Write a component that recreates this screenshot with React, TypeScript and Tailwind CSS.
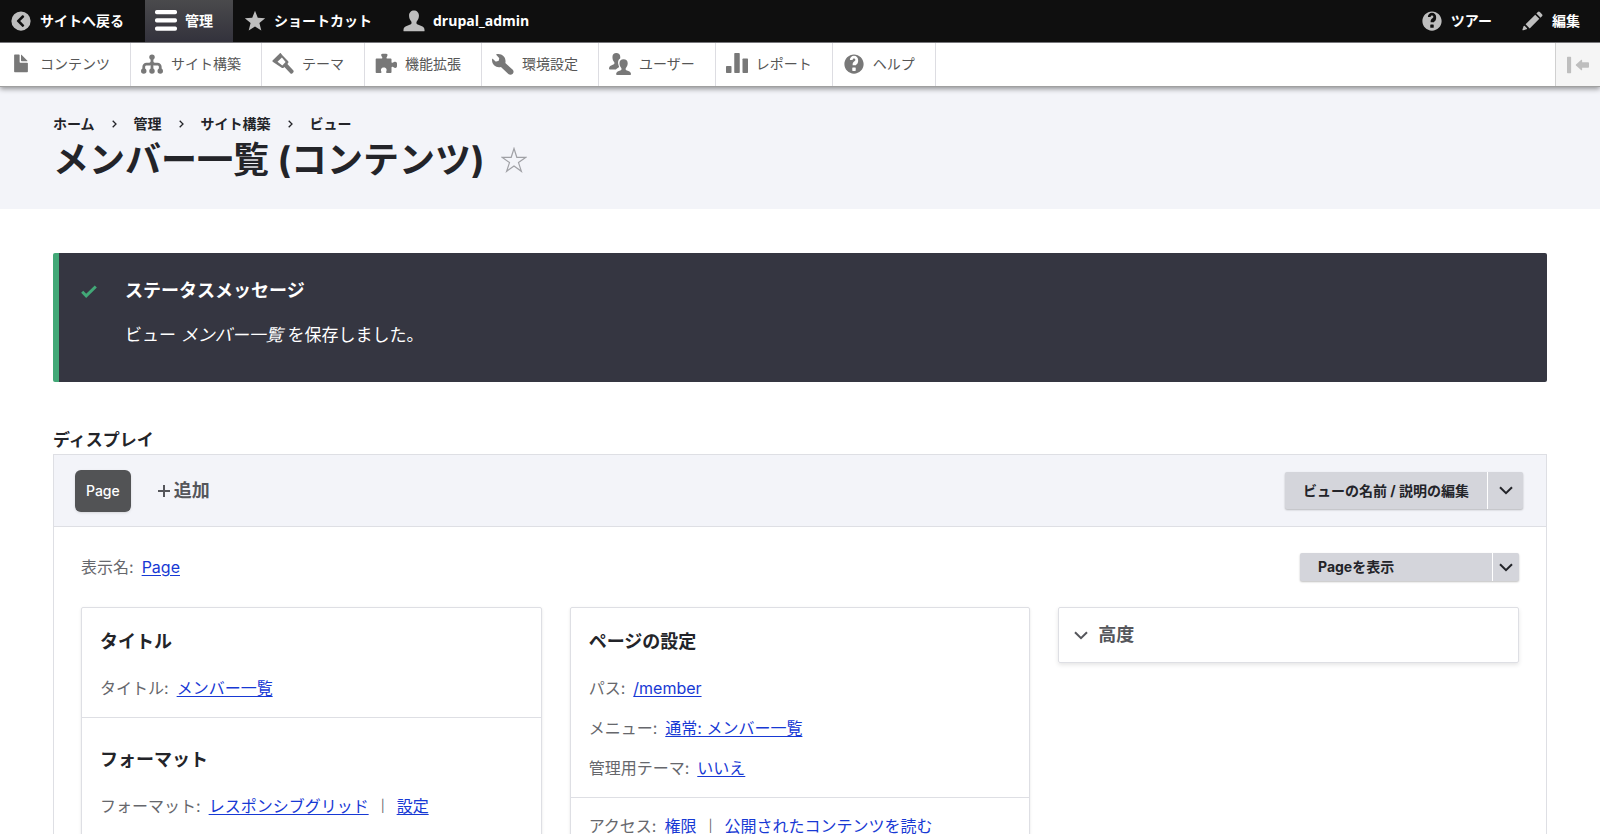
import React, { useState } from "react";

type IconProps = { className?: string; children: React.ReactNode };

const Icon = ({ className = "", children }: IconProps) => (
  <svg
    viewBox="0 0 16 16"
    fill="currentColor"
    aria-hidden="true"
    className={`size-[22px] shrink-0 ${className}`}
  >
    {children}
  </svg>
);

const BackIcon = () => (
  <Icon>
    <path
      fillRule="evenodd"
      d="M8 1a7 7 0 1 0 0 14A7 7 0 0 0 8 1zm2.2 9.9c.2.2.2.5 0 .7l-.6.6c-.2.2-.5.2-.7 0L5.1 8.4a.5.5 0 0 1 0-.7l3.800-3.800c.2-.2.5-.2.7 0l.6.6c.2.2.2.5 0 .7L7.400 8z"
    />
  </Icon>
);

const MenuIcon = () => (
  <Icon>
    <rect x="0" y="0" width="16" height="3" rx="1.25" />
    <rect x="0" y="6" width="16" height="3" rx="1.25" />
    <rect x="0" y="12" width="16" height="3" rx="1.25" />
  </Icon>
);

const StarIcon = () => (
  <Icon>
    <path d="M8 .6l2 5.1 5.4.3-4.2 3.5 1.4 5.4L8 12l-4.6 2.9 1.4-5.4L.6 6 6 5.7z" />
  </Icon>
);

const PersonIcon = () => (
  <Icon>
    <path d="M8 .3c2.1 0 3.6 1.5 3.6 3.7 0 1.7-.6 3.2-1.5 4.2-.5.6-.4 1.9.2 2.2l3.5 1.5c1 .4 1.7 1.2 1.8 2.3l.1.8c0 .3-.2.5-.5.5H.8c-.3 0-.5-.2-.5-.5l.1-.8c.1-1.1.8-1.900 1.800-2.300l3.500-1.500c.6-.3.7-1.600.2-2.200C5 7.200 4.400 5.700 4.400 4 4.400 1.800 5.900.3 8 .3z" />
  </Icon>
);

const QuestionIcon = () => (
  <Icon>
    <path d="M8.002 1c-3.868 0-7.002 3.134-7.002 7s3.134 7 7.002 7c3.865 0 7-3.134 7-7s-3.135-7-7-7zm3 5c0 .551-.16 1.085-.477 1.586l-.158.22c-.07.093-.189.241-.361.393-.168.148-.35.299-.545.447l-.203.189-.141.129-.096.17L9 8.369v.63H7v-.704c.026-.396.078-.73.204-.999.125-.269.271-.498.439-.688l.225-.21-.01-.015.176-.14.137-.128c.186-.139.357-.277.516-.417l.148-.18A.948.948 0 009 5c0-.553-.449-1-1-1s-.999.447-.999 1h-2c0-1.654 1.346-3 3-3s3 1.346 3 3zm-1.75 6.619a.382.382 0 01-.381.381h-1.75a.382.382 0 01-.381-.381v-1.75c0-.21.171-.381.381-.381h1.75c.21 0 .381.171.381.381v1.75z" />
  </Icon>
);

const PencilIcon = () => (
  <Icon>
    <path d="M14.545 3.042l-1.586-1.585a1 1 0 0 0-1.414 0l-1.093 1.093 3 3 1.093-1.093a1 1 0 0 0 0-1.415zM5.6 13.4l-3-3 7-7 3 3zM.94 14.731c-.491.163-.758-.104-.595-.595l.788-2.364a.5.5 0 0 1 .9-.1l1.4 1.4a.5.5 0 0 1-.1.9z" />
  </Icon>
);

const FileIcon = () => (
  <Icon>
    <path d="M12.500 7h-5a.5.5 0 0 1-.5-.5v-5c0-.275-.225-.5-.5-.5h-3a.5.5 0 0 0-.5.5v12.029c0 .275.225.5.5.5h9.002c.275 0 .5-.225.5-.5V7.500c0-.275-.225-.5-.5-.5zM8.502 6h4c.275 0 .34-.159.146-.354L8.355 1.354c-.195-.195-.353-.129-.353.146v4c0 .275.225.5.5.5z" />
  </Icon>
);

const StructureIcon = () => (
  <Icon>
    <path d="M15 11.3V10c0-1.7-1.3-3-3-3h-2c-.6 0-1-.4-1-1V4.700c.6-.3 1-1 1-1.700a2 2 0 1 0-4 0c0 .7.4 1.4 1 1.700V6c0 .6-.4 1-1 1H4c-1.700 0-3 1.300-3 3v1.300c-.6.3-1 1-1 1.700a2 2 0 1 0 4 0c0-.7-.4-1.400-1-1.700V10c0-.6.4-1 1-1h2c.37 0 .7-.06 1-.17v2.470c-.6.3-1 1-1 1.700a2 2 0 1 0 4 0c0-.7-.4-1.400-1-1.700V8.830c.3.11.63.17 1 .17h2c.6 0 1 .4 1 1v1.300c-.6.3-1 1-1 1.700a2 2 0 1 0 4 0c0-.7-.4-1.400-1-1.700z" />
  </Icon>
);

const BrushIcon = () => (
  <Icon>
    <path
      fillRule="evenodd"
      d="M.4 5.400L5.600.3c.3-.3.6-.3.9 0l1.200 1.500 3.900 4.100c.5.6.5 1.100 0 1.600l-.4.5 4.200 4.600c.5.5.5 1.100 0 1.600l-.5.5c-.5.5-1.100.5-1.600 0L9 10.200l-.4.4c-.5.5-1 .5-1.600.1L.5 6.300c-.3-.3-.3-.6-.1-.9zM7.200 3.300L4 6.400l3.500 2.600 2.400-2.400z"
    />
  </Icon>
);

const PuzzleIcon = () => (
  <Icon>
    <path d="M.5 4.500C.5 4.200.7 4 1 4h3.700c.5 0 .8-.4.6-.8L4.600 2c-.3-.8 0-1.500.9-1.500h2.600c.9 0 1.200.7.9 1.500l-.6 1.200c-.2.400.1.800.6.800h2.400c.3 0 .6.200.6.500v2c0 .5.4.8.8.6l1.400-.7c.9-.4 1.800.2 1.800 1.300v1.700c0 1.100-.9 1.700-1.800 1.300l-1.400-.7c-.4-.2-.8.1-.8.6v3.400c0 .3-.3.5-.6.5H8.700c-.5 0-.8-.4-.6-.8.7-1.200.5-3.200-1.700-3.200s-2.400 2-1.700 3.200c.2.4-.1.8-.6.8H1c-.3 0-.5-.2-.5-.5V4.500z" />
  </Icon>
);

const WrenchIcon = () => (
  <Icon>
    <path d="M15.100 12.200L9.700 7.300c.4-1.700 0-3.600-1.300-4.900C7.100 1 5.100.4 3.300.9c-.3.1-.4.4-.1.6l1.800 1.900c.2.2.3.5.2.8l-.3 1.200c-.1.3-.3.5-.5.5l-1.300.3c-.3.1-.6 0-.7-.2L.7 4.300c-.2-.2-.5-.2-.6.1-.3 1.600.2 3.300 1.400 4.500 1.400 1.300 3.300 1.700 5 1.200l5.400 5.100c.9.8 2.200.8 3 0l.2-.1c.8-.8.8-2.100 0-2.900z" />
  </Icon>
);

const PeopleIcon = () => (
  <Icon>
    <path d="M5.300 0c1.700 0 2.900 1.100 2.900 2.900 0 .4 0 .7-.1 1.100C6.700 4.900 6.200 6.600 6.900 8.700c.2.7.5 1.200.4 1.500-.2.7-1.600.8-2.300 1.800H.6c-.3 0-.6-.2-.6-.5 0-1.200.5-2 1.600-2.500l1.900-.8c.6-.3.6-1.100.2-1.600C3 5.800 2.500 4.400 2.500 2.900 2.500 1.100 3.600 0 5.300 0z" />
    <path d="M10.600 4.600c1.800 0 3 1.100 3 2.800 0 1.300-.5 2.500-1.200 3.300-.5.6-.4 1.500.2 1.800l1.900.8c1 .4 1.500 1.200 1.500 2.200 0 .3-.3.5-.6.5H5.800c-.3 0-.6-.2-.6-.5 0-1 .5-1.800 1.500-2.200l1.900-.8c.6-.3.7-1.200.2-1.800-.7-.8-1.200-2-1.200-3.300 0-1.700 1.200-2.800 3-2.800z" />
  </Icon>
);

const ReportIcon = () => (
  <Icon>
    <rect x="0" y="9.5" width="4" height="5" rx=".5" />
    <rect x="6" y="0" width="4" height="14.5" rx=".5" />
    <rect x="12" y="4" width="4" height="10.5" rx=".5" />
  </Icon>
);

const PushLeftIcon = () => (
  <Icon>
    <path d="M.5 2h2c.3 0 .5.2.5.5v11c0 .3-.2.5-.5.5h-2a.5.5 0 0 1-.5-.5v-11c0-.3.2-.5.5-.5zM15.400 6H11V4.500c0-.4-.3-.5-.6-.3L6.500 7.700c-.2.2-.2.4 0 .6l3.900 3.500c.3.2.6.1.6-.3V10h4.400c.3 0 .6-.2.6-.5v-3c0-.3-.3-.5-.6-.5z" />
  </Icon>
);

const Chevron = () => (
  <svg
    viewBox="0 0 14 9"
    fill="none"
    stroke="currentColor"
    strokeWidth="2"
    aria-hidden="true"
    className="h-[9px] w-[14px] shrink-0"
  >
    <path d="M1 1.200l6 6 6-6" />
  </svg>
);

const trayLinks = [
  { label: "コンテンツ", icon: <FileIcon /> },
  { label: "サイト構築", icon: <StructureIcon /> },
  { label: "テーマ", icon: <BrushIcon /> },
  { label: "機能拡張", icon: <PuzzleIcon /> },
  { label: "環境設定", icon: <WrenchIcon /> },
  { label: "ユーザー", icon: <PeopleIcon /> },
  { label: "レポート", icon: <ReportIcon /> },
  { label: "ヘルプ", icon: <QuestionIcon /> },
];

const breadcrumbs = ["ホーム", "管理", "サイト構築", "ビュー"];

type BarItemProps = { label: string; icon: React.ReactNode; active?: boolean };

const BarItem = ({ label, icon, active }: BarItemProps) => (
  <a
    href="#"
    className={`flex h-full items-center gap-2 pl-[10px] pr-5 text-sm font-bold text-white ${
      active ? "bg-linear-to-b from-[#4a4a4c] to-[#33323c]" : ""
    }`}
  >
    <span className={active ? "text-white" : "text-[#bebebe]"}>{icon}</span>
    {label}
  </a>
);

type SettingProps = { label: string; links: string[] };

const Setting = ({ label, links }: SettingProps) => (
  <div className="flex h-10 items-center gap-2 text-base text-[#66676c]">
    <span>{label}:</span>
    {links.map((link, i) => (
      <React.Fragment key={link}>
        {i > 0 && <span className="px-1 text-xs">|</span>}
        <a href="#" className="text-[#1739d4] underline underline-offset-2">
          {link}
        </a>
      </React.Fragment>
    ))}
  </div>
);

type BucketProps = { title?: string; children: React.ReactNode };

const Bucket = ({ title, children }: BucketProps) => (
  <section
    className={`border-b border-[#dedfe4] px-[18px] pb-[9px] last:border-b-0 last:pb-10 ${
      title ? "pt-4 first:pt-2" : "pt-2"
    }`}
  >
    {title && (
      <h3 className="py-3 text-lg/7 font-bold text-[#232429]">{title}</h3>
    )}
    {children}
  </section>
);

const App = () => {
  const [advancedOpen, setAdvancedOpen] = useState(false);

  return (
    <div className="h-screen overflow-hidden bg-white font-[Inter,'Noto_Sans_CJK_JP',sans-serif] text-[#232429]">
      <div className="relative font-['Open_Sans','Noto_Sans_CJK_JP',sans-serif] shadow-[0_2px_5px_rgba(0,0,0,0.4)]">
        <nav
          aria-label="ツールバー"
          className="flex h-[42px] justify-between bg-[#0f0f0f]"
        >
          <div className="flex gap-px">
            <BarItem label="サイトへ戻る" icon={<BackIcon />} />
            <BarItem label="管理" icon={<MenuIcon />} active />
            <BarItem label="ショートカット" icon={<StarIcon />} />
            <BarItem label="drupal_admin" icon={<PersonIcon />} />
          </div>
          <div className="flex">
            <BarItem label="ツアー" icon={<QuestionIcon />} />
            <BarItem label="編集" icon={<PencilIcon />} />
          </div>
        </nav>
        <nav
          aria-label="管理メニュー"
          className="flex h-[45px] justify-between border-b border-t border-b-[#a0a0a0] border-t-[#77777b] bg-white"
        >
          <div className="flex">
            {trayLinks.map((item) => (
              <a
                key={item.label}
                href="#"
                className="flex items-center gap-2 border-r border-[#dddde2] pb-px pl-[10px] pr-5 text-sm text-[#565656]"
              >
                <span className="text-[#787878]">{item.icon}</span>
                {item.label}
              </a>
            ))}
          </div>
          <button
            type="button"
            aria-label="縦方向"
            className="flex items-center border-l border-[#d0d0d0] bg-[#f5f5f5] px-[11px] text-[#bebebe]"
          >
            <PushLeftIcon />
          </button>
        </nav>
      </div>

      <header className="bg-[#f3f4f9] px-[53px] pb-6 pt-[27px]">
        <nav aria-label="パンくず">
          <ol className="flex h-5 items-center text-sm font-bold">
            {breadcrumbs.map((crumb, i) => (
              <li key={crumb} className="flex items-center">
                {i > 0 && (
                  <svg
                    viewBox="0 0 5 8"
                    fill="none"
                    stroke="currentColor"
                    strokeWidth="1.3"
                    aria-hidden="true"
                    className="mx-[17px] h-2 w-[5px]"
                  >
                    <path d="M.7.7L4 4 .7 7.3" />
                  </svg>
                )}
                <a href="#">{crumb}</a>
              </li>
            ))}
          </ol>
        </nav>
        <div className="flex h-[51px] items-center gap-4">
          <h1 className="text-4xl font-bold">メンバー一覧 (コンテンツ)</h1>
          <button type="button" aria-label="ショートカットに追加">
            <svg
              viewBox="0 0 26 26"
              fill="none"
              stroke="#a0a1a6"
              strokeWidth="1.2"
              className="size-[26px]"
            >
              <path d="M13 1.500l2.800 8.800h9.200l-7.500 5.300 2.900 8.700-7.400-5.400-7.400 5.400 2.900-8.700L1 10.300h9.200z" />
            </svg>
          </button>
        </div>
      </header>

      <main className="px-[53px]">
        <div
          role="status"
          className="mt-11 flex gap-7 rounded-xs border-l-6 border-[#42a877] bg-[#353641] pb-[33px] pl-[22px] pt-6 text-white"
        >
          <svg
            viewBox="0 0 16 13"
            fill="none"
            stroke="#42a877"
            strokeWidth="3"
            aria-hidden="true"
            className="mt-2 h-[13px] w-4"
          >
            <path d="M1.200 6.800l4 4L14.800 1.500" />
          </svg>
          <div>
            <h2 className="text-lg/7 font-bold">ステータスメッセージ</h2>
            <p className="mt-4 text-[17px]/7">
              ビュー <em>メンバー一覧</em> を保存しました。
            </p>
          </div>
        </div>

        <h2 className="mt-11 text-[17px]/7 font-bold">ディスプレイ</h2>
        <div className="border border-[#dedfe4]">
          <div className="flex h-[72px] items-center justify-between border-b border-[#dedfe4] bg-[#f3f4f9] pl-[21px] pr-[23px]">
            <div className="flex items-center gap-[27px]">
              <button
                type="button"
                className="h-[42px] rounded-md bg-[#525355] px-[11px] text-sm font-medium text-white shadow-sm"
              >
                Page
              </button>
              <button
                type="button"
                className="flex items-center gap-1 text-lg font-bold text-[#55565b]"
              >
                <svg
                  viewBox="0 0 12 12"
                  stroke="currentColor"
                  strokeWidth="2"
                  aria-hidden="true"
                  className="size-3"
                >
                  <path d="M6 0v12M0 6h12" />
                </svg>
                追加
              </button>
            </div>
            <div className="flex h-[37px] rounded-xs bg-[#d4d5db] text-sm font-bold shadow-[0_1px_2px_rgba(0,0,0,0.25)]">
              <button type="button" className="px-[18px]">
                ビューの名前 / 説明の編集
              </button>
              <button
                type="button"
                aria-label="その他の操作"
                className="flex w-9 items-center justify-center border-l border-white"
              >
                <Chevron />
              </button>
            </div>
          </div>

          <div className="px-[27px] pb-10 pt-5">
            <div className="flex items-center justify-between">
              <Setting label="表示名" links={["Page"]} />
              <div className="flex h-7 w-[219px] rounded-xs bg-[#d4d5db] text-sm font-bold shadow-[0_1px_2px_rgba(0,0,0,0.25)]">
                <button type="button" className="grow pl-[18px] text-left">
                  Pageを表示
                </button>
                <button
                  type="button"
                  aria-label="その他の表示操作"
                  className="flex w-[27px] items-center justify-center border-l border-white"
                >
                  <Chevron />
                </button>
              </div>
            </div>

            <div className="mt-5 grid grid-cols-3 items-start gap-7">
              <div className="rounded-xs border border-[#dedfe4] shadow-[0_1px_3px_rgba(0,0,0,0.1)]">
                <Bucket title="タイトル">
                  <Setting label="タイトル" links={["メンバー一覧"]} />
                </Bucket>
                <Bucket title="フォーマット">
                  <Setting
                    label="フォーマット"
                    links={["レスポンシブグリッド", "設定"]}
                  />
                </Bucket>
              </div>
              <div className="rounded-xs border border-[#dedfe4] shadow-[0_1px_3px_rgba(0,0,0,0.1)]">
                <Bucket title="ページの設定">
                  <Setting label="パス" links={["/member"]} />
                  <Setting label="メニュー" links={["通常: メンバー一覧"]} />
                  <Setting label="管理用テーマ" links={["いいえ"]} />
                </Bucket>
                <Bucket>
                  <Setting
                    label="アクセス"
                    links={["権限", "公開されたコンテンツを読む"]}
                  />
                </Bucket>
              </div>
              <button
                type="button"
                aria-expanded={advancedOpen}
                onClick={() => setAdvancedOpen(!advancedOpen)}
                className="flex h-14 items-center gap-[10px] rounded-xs border border-[#dedfe4] px-[15px] text-lg font-bold text-[#55565b] shadow-[0_2px_4px_rgba(0,0,0,0.1)]"
              >
                <Chevron />
                高度
              </button>
            </div>
          </div>
        </div>
      </main>
    </div>
  );
};

export default App;
